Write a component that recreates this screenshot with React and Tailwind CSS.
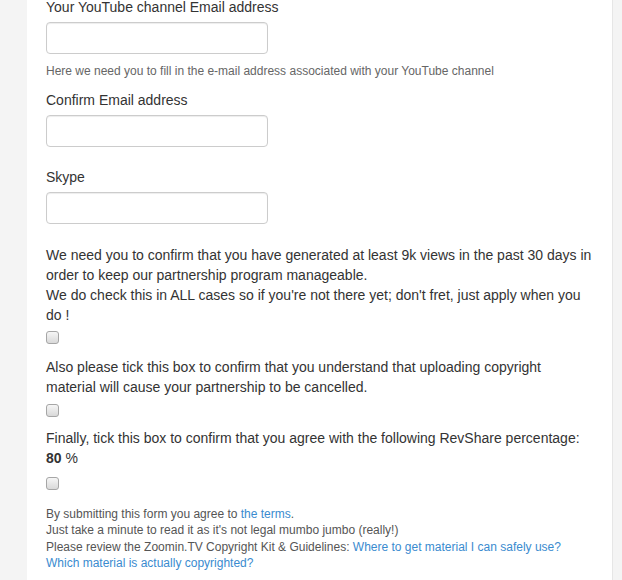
import React from "react";

// Campo de formulario con etiqueta e input
function Field({ label, className = "", children }) {
  return (
    <div className={className}>
      <label className="block text-[14px] leading-[20px] text-[#333] mb-[5px]">{label}</label>
      <input
        type="text"
        className="block w-[222px] h-[32px] border border-[#cccccc] rounded-[4px] bg-white shadow-[inset_0_1px_1px_rgba(0,0,0,0.075)]"
      />
      {children}
    </div>
  );
}

// Checkbox con el estilo gris antiguo
function Check({ className = "" }) {
  return (
    <input
      type="checkbox"
      className={
        "block appearance-none w-[13px] h-[13px] rounded-[3px] border border-[#a6a6a6] bg-gradient-to-b from-[#f6f6f6] to-[#d9d9d9] " +
        className
      }
    />
  );
}

export default function App() {
  return (
    <div
      className="min-h-[580px] bg-[#f4f4f4]"
      style={{ fontFamily: '"Liberation Sans", Arial, sans-serif' }}
    >
      <div className="ml-[27px] w-[586px] min-h-[580px] bg-white border-r border-[#e6e6e6] px-[18px] overflow-hidden">
        <div className="-mt-[3px] pl-px">
          <Field label="Your YouTube channel Email address">
            <p className="mt-[9px] text-[12px] leading-[17px] text-[#666]">
              Here we need you to fill in the e-mail address associated with your YouTube channel
            </p>
          </Field>
          <Field label="Confirm Email address" className="mt-[10px]" />
          <Field label="Skype" className="mt-[20px]" />

          <p className="mt-[21px] text-[14px] leading-[20px] text-[#333]">
            We need you to confirm that you have generated at least 9k views in the past 30 days in order to keep our partnership program manageable.
            <br />
            We do check this in ALL cases so if you're not there yet; don't fret, just apply when you do !
          </p>
          <Check className="mt-[6px]" />

          <p className="mt-[13px] text-[14px] leading-[20px] text-[#333]">
            Also please tick this box to confirm that you understand that uploading copyright material will cause your partnership to be cancelled.
          </p>
          <Check className="mt-[7px]" />

          <p className="mt-[11px] text-[14px] leading-[20px] text-[#333]">
            Finally, tick this box to confirm that you agree with the following RevShare percentage:
            <br />
            <b>80</b> %
          </p>
          <Check className="mt-[9px]" />

          <p className="mt-[16px] text-[12px] leading-[16.4px] text-[#555]">
            By submitting this form you agree to <a className="text-[#3a8bcf]" href="#">the terms</a>.
            <br />
            Just take a minute to read it as it's not legal mumbo jumbo (really!)
            <br />
            Please review the Zoomin.TV Copyright Kit &amp; Guidelines:{" "}
            <a className="text-[#3a8bcf]" href="#">Where to get material I can safely use?</a>
            <br />
            <a className="text-[#3a8bcf]" href="#">Which material is actually copyrighted?</a>
          </p>
        </div>
      </div>
    </div>
  );
}
